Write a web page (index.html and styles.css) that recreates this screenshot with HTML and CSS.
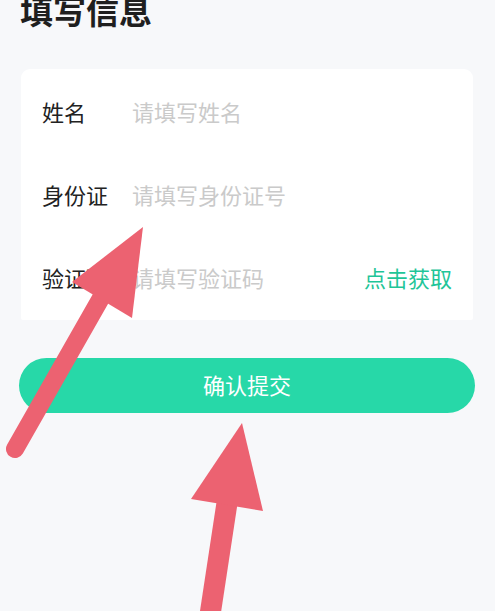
FILE: index.html
```html
<!DOCTYPE html>
<html lang="zh-CN">
<head>
    <meta charset="UTF-8">
    <meta name="viewport" content="width=device-width, initial-scale=1.0">
    <title>填写信息</title>
    <link rel="stylesheet" href="styles.css">
</head>
<body>
    <main class="page">
        <h1 class="title">填写信息</h1>

        <!-- Info form -->
        <form class="card">
            <label class="row">
                <span class="label">姓名</span>
                <input class="field" type="text" placeholder="请填写姓名">
            </label>
            <label class="row">
                <span class="label">身份证</span>
                <input class="field" type="text" placeholder="请填写身份证号">
            </label>
            <div class="row">
                <span class="label">验证码</span>
                <input class="field" type="text" placeholder="请填写验证码">
                <a class="code-link" href="#">点击获取</a>
            </div>
        </form>

        <button class="submit-btn" type="button">确认提交</button>
    </main>

    <!-- Annotation arrows drawn over the page -->
    <svg class="marks" width="495" height="611" viewBox="0 0 495 611">
        <g fill="#ec6271" stroke="#ec6271">
            <line x1="101" y1="298" x2="15" y2="449" stroke-width="18" stroke-linecap="round"/>
            <polygon points="143,227 72,282 132,318" stroke="none"/>
            <path d="M227 503 Q220 550 210 615" fill="none" stroke-width="21"/>
            <polygon points="242,423 191,499 263,511" stroke="none"/>
        </g>
    </svg>
</body>
</html>
```

FILE: styles.css
```css
body {
  margin: 0;
  background-color: #f7f8fa;
  font-family: "Noto Sans CJK SC", "Noto Sans", sans-serif;
  color: #222;
}

.page {
  padding: 0 22px 0 21px;
}

.title {
  margin: -6px 0 0 -1px;
  font-size: 33px;
  line-height: 33px;
  font-weight: 700;
  color: #1f1f1f;
}

/* Form card */
.card {
  margin-top: 42px;
  padding: 0 21px 2px 21px;
  background-color: #fff;
  border-radius: 9px 9px 2px 2px;
}

.row {
  display: flex;
  align-items: center;
  height: 83px;
}

.label {
  width: 90px;
  flex-shrink: 0;
  font-size: 22px;
  color: #222;
}

.field {
  flex: 1;
  min-width: 0;
  border: none;
  outline: none;
  padding: 0;
  background: transparent;
  font-family: inherit;
  font-size: 22px;
  color: #222;
}

.field::placeholder {
  color: #cacaca;
}

.code-link {
  font-size: 22px;
  color: #1fc598;
  text-decoration: none;
}

/* Submit button */
.submit-btn {
  display: block;
  width: calc(100% + 4px);
  height: 55px;
  margin: 38px -2px 0 -2px;
  padding: 0 0 3px 0;
  border: none;
  border-radius: 28px;
  background-color: #27d8a8;
  color: #fff;
  font-family: inherit;
  font-size: 22px;
  cursor: pointer;
}

.marks {
  position: absolute;
  top: 0;
  left: 0;
  pointer-events: none;
}
```
